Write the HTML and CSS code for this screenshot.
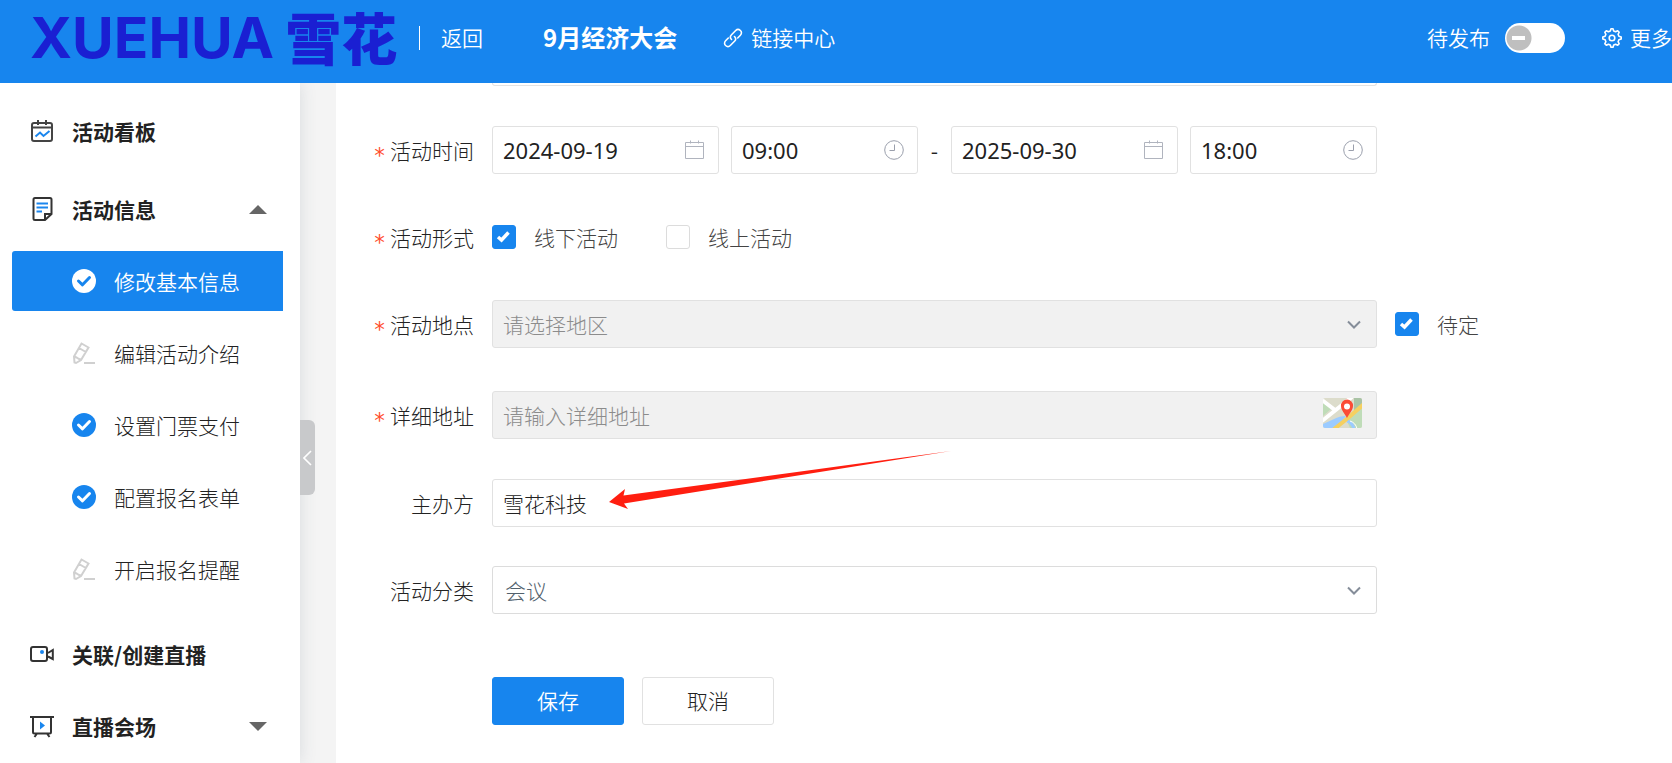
FILE: index.html
```html
<!DOCTYPE html>
<html lang="zh-CN">
<head>
<meta charset="utf-8">
<title>9月经济大会</title>
<link rel="stylesheet" href="styles.css">
</head>
<body>
<svg class="defs" aria-hidden="true">
  <symbol id="done" viewBox="0 0 24 24"><circle cx="12" cy="12" r="12" fill="currentColor"/><path class="tick" d="M6.500 12l4 3.800L17.500 8.500" fill="none" stroke-width="3" stroke-linecap="round" stroke-linejoin="round"/></symbol>
  <symbol id="pencil" viewBox="0 0 24 24"><g fill="none" stroke="#d0d0d0" stroke-width="2"><path d="M2.500 21.500L2 15.500 9.500 2.500l7 4L9 19 4 22zM7 7l6.800 4M2 15.500l2.500 1 1.500 1 3 1.500M12 22h11"/></g></symbol>
  <symbol id="check" viewBox="0 0 24 24"><path d="M6 12l3.500 3L16.500 7.500" fill="none" stroke="#fff" stroke-width="3.500"/></symbol>
  <symbol id="calendar" viewBox="0 0 20 20"><path d="M.5 2.500h18v16H.5zM.5 6.500h18M5.500.5v3M13.500.5v3" fill="none" stroke="#b0b4be"/></symbol>
  <symbol id="clock" viewBox="0 0 20 20"><circle cx="10" cy="10" r="9.300" fill="none" stroke="#9a9fac"/><path d="M10.500 4.500v6H5.500" fill="none" stroke="#9a9fac"/></symbol>
  <symbol id="chevron" viewBox="0 0 14 9"><path d="M1 1.500l6 6 6-6" fill="none" stroke="#858d99" stroke-width="2"/></symbol>
</svg>

<header class="header">
  <div class="logo"><span class="logo-latin">XUEHUA</span><span class="logo-cjk">雪花</span></div>
  <a class="back" href="#">返回</a>
  <h1 class="title">9月经济大会</h1>
  <a class="links" href="#">
    <svg width="20" height="20" viewBox="0 0 20 20" fill="none" stroke="currentColor" stroke-width="1.600" stroke-linecap="round"><path d="M8.500 11.500C7 10 7.200 8 8.500 6.700L12.700 2.500C14 1.200 16 1.200 17.400 2.500s1.400 3.400 0 4.800L14.700 10M11.500 8.500c1.500 1.500 1.300 3.500 0 4.800L7.300 17.500C6 18.800 4 18.800 2.600 17.500s-1.400-3.400 0-4.800L5.300 10"/></svg>
    <span>链接中心</span>
  </a>
  <div class="publish">
    <label for="publish">待发布</label>
    <input class="switch" type="checkbox" role="switch" id="publish">
  </div>
  <button class="more" type="button">
    <svg width="20" height="20" viewBox="0 0 20 20" fill="none" stroke="currentColor" stroke-width="1.600" stroke-linejoin="round"><path d="M8.300 3L9 .8h2L11.700 3l1.900.8 2.100-1.100 1.500 1.500-1.100 2.100.8 1.900 2.300.8v2l-2.300.8-.8 1.900 1.100 2.100-1.500 1.500-2.100-1.100-1.900.8-.7 2.200H9L8.300 17l-1.900-.8-2.100 1.100-1.500-1.500 1.100-2.100-.8-1.900L.8 11V9l2.300-.8.8-1.900-1.100-2.100 1.500-1.500 2.100 1.100z"/><circle cx="10" cy="10" r="2.800"/></svg>
    <span>更多</span>
  </button>
</header>

<div class="layout">
  <nav class="sidebar">
    <a class="group group--first" href="#">
      <svg class="group-icon" viewBox="0 0 24 24" fill="none" stroke="#444" stroke-width="2"><rect x="2" y="4" width="20" height="18" rx="2"/><path d="M2 8.500h20M8 1v5M16 1v5"/><path d="M5.500 17.500l4.500-4 3.500 3.500 6-5" stroke="#1a86ee"/></svg>
      活动看板
    </a>
    <a class="group" href="#">
      <svg class="group-icon" viewBox="0 0 24 24" fill="none" stroke="#333" stroke-width="2"><path d="M5 1h15a1.500 1.500 0 0 1 1.500 1.500V17L15 23H5a1.500 1.500 0 0 1-1.500-1.500v-19A1.500 1.500 0 0 1 5 1zM15 23v-6h6.500"/><path d="M6.500 6.500H18M6.500 10.500H18M6.500 14.500h5.500" stroke="#1a86ee"/></svg>
      活动信息
      <span class="caret caret--up"></span>
    </a>
    <ul class="sub">
      <li><a class="sub-item sub-item--active" href="#"><svg class="sub-icon"><use href="#done"/></svg>修改基本信息</a></li>
      <li><a class="sub-item" href="#"><svg class="sub-icon"><use href="#pencil"/></svg>编辑活动介绍</a></li>
      <li><a class="sub-item" href="#"><svg class="sub-icon"><use href="#done"/></svg>设置门票支付</a></li>
      <li><a class="sub-item" href="#"><svg class="sub-icon"><use href="#done"/></svg>配置报名表单</a></li>
      <li><a class="sub-item" href="#"><svg class="sub-icon"><use href="#pencil"/></svg>开启报名提醒</a></li>
    </ul>
    <a class="group group--compact" href="#">
      <svg class="group-icon" viewBox="0 0 24 24" fill="none" stroke="#333" stroke-width="2"><rect x="1" y="5" width="16" height="14" rx="2"/><path d="M18 11l4.800-3v9L18 14.500"/><circle cx="12" cy="10" r="2" fill="#1a86ee" stroke="none"/></svg>
      关联/创建直播
    </a>
    <a class="group group--compact" href="#">
      <svg class="group-icon" viewBox="0 0 24 24" fill="none" stroke="#333" stroke-width="2"><path d="M0 3h24M3 3v15a1.500 1.500 0 0 0 1.500 1.500h15A1.500 1.500 0 0 0 21 18V3M7 19.500L4.500 23M17 19.500l2.500 3.500"/><path d="M10 7.500l5 4-5 4z" fill="#1a86ee" stroke="none"/></svg>
      直播会场
      <span class="caret caret--down"></span>
    </a>
    <button class="collapse" type="button" aria-label="收起菜单">
      <svg width="9" height="16" viewBox="0 0 9 16"><path d="M8 1L1 8l7 7" fill="none" stroke="#fff" stroke-width="1.600"/></svg>
    </button>
  </nav>

  <main class="main">
    <form class="form">
      <div class="row row--clipped"><div class="clipped-field"></div></div>

      <div class="row">
        <label class="label required" for="start-date">活动时间</label>
        <div class="period">
          <div class="moment">
            <div class="field field--date"><input class="input" id="start-date" type="text" value="2024-09-19"><svg class="picker"><use href="#calendar"/></svg></div>
            <div class="field field--time"><input class="input" type="text" aria-label="开始时间" value="09:00"><svg class="picker"><use href="#clock"/></svg></div>
          </div>
          <span class="dash">-</span>
          <div class="moment">
            <div class="field field--date"><input class="input" type="text" aria-label="结束日期" value="2025-09-30"><svg class="picker"><use href="#calendar"/></svg></div>
            <div class="field field--time"><input class="input" type="text" aria-label="结束时间" value="18:00"><svg class="picker"><use href="#clock"/></svg></div>
          </div>
        </div>
      </div>

      <div class="row row--tight">
        <span class="label required">活动形式</span>
        <div class="options">
          <label class="option"><span class="box"><input type="checkbox" checked><svg><use href="#check"/></svg></span>线下活动</label>
          <label class="option"><span class="box"><input type="checkbox"><svg><use href="#check"/></svg></span>线上活动</label>
        </div>
      </div>

      <div class="row row--tight">
        <label class="label required" for="region">活动地点</label>
        <div class="field"><select class="input" id="region" disabled><option>请选择地区</option></select><svg class="chevron"><use href="#chevron"/></svg></div>
        <label class="option"><span class="box"><input type="checkbox" checked><svg><use href="#check"/></svg></span>待定</label>
      </div>

      <div class="row row--loose">
        <label class="label required" for="address">详细地址</label>
        <div class="field">
          <input class="input" id="address" type="text" placeholder="请输入详细地址" disabled>
          <svg class="map" viewBox="0 0 39 30">
            <clipPath id="map-edge"><rect width="39" height="30" rx="2"/></clipPath>
            <g clip-path="url(#map-edge)">
              <path fill="#dcdccb" d="M0 0h39v30H0z"/>
              <path fill="#bfdcb8" d="M0 4l8 7-8 7zM39 8v22H27l-3-7z"/>
              <path fill="#a9c3a5" d="M31 0h8v7l-8 6z"/>
              <path fill="none" stroke="#fff" stroke-width="4" d="M-1 2l13 10M-1 23L29-1"/>
              <path fill="#9bcbff" d="M0 26c8-3 14-8 23-8l-9 12H0z"/>
              <path fill="none" stroke="#9bcbff" stroke-width="3" d="M24 23q5 1 7 8"/>
              <path fill="none" stroke="#fff" stroke-width="1" d="M27 23q6 2 7 8"/>
              <path fill="none" stroke="#f5d060" stroke-width="4" d="M10 32L25 20 41 6"/>
              <path fill="#fb4b35" d="M24 1.500a6 6 0 0 1 6 6.500c0 4-4 8-6 12-2-4-6-8-6-12a6 6 0 0 1 6-6.500z"/>
              <circle cx="24" cy="8.500" r="3" fill="#fff"/>
            </g>
          </svg>
        </div>
      </div>

      <div class="row">
        <label class="label" for="host">主办方</label>
        <div class="field">
          <input class="input" id="host" type="text" value="雪花科技">
          <svg class="arrow" viewBox="0 0 342 60"><path fill="#ff1e10" d="M0 51L16 38 14.500 44.500 342 0 15 52.500 19 58z"/></svg>
        </div>
      </div>

      <div class="row row--tight">
        <label class="label" for="category">活动分类</label>
        <div class="field"><select class="input input--category" id="category"><option>会议</option></select><svg class="chevron"><use href="#chevron"/></svg></div>
      </div>

      <div class="row row--actions">
        <div class="actions">
          <button class="button button--primary" type="submit">保存</button>
          <button class="button" type="button">取消</button>
        </div>
      </div>
    </form>
  </main>
</div>
</body>
</html>
```
FILE: styles.css
```css
* {
  box-sizing: border-box;
}

body {
  margin: 0;
  height: 100vh;
  display: flex;
  flex-direction: column;
  overflow: hidden;
  color: #222;
  background: #f4f4f4;
  font: 300 21px/30px "Noto Sans CJK SC", sans-serif;
}

a {
  color: inherit;
  text-decoration: none;
}

button,
input,
select {
  font: inherit;
  color: inherit;
}

.defs {
  position: absolute;
  width: 0;
  height: 0;
}

/* Header */
.header {
  position: relative;
  z-index: 1;
  flex: none;
  display: flex;
  align-items: center;
  height: 83px;
  padding: 0 0 7px 30px;
  color: #fff;
  background: #1785ee;
  font-weight: 350;
  white-space: nowrap;
}

.back,
.title,
.links span,
.publish label,
.more span {
  padding-bottom: 3px;
}

.logo {
  display: flex;
  align-items: center;
  gap: 11px;
  width: 389px;
  color: #1a1fd2;
  line-height: 70px;
}

.logo-latin {
  font-family: Inter, sans-serif;
  font-size: 57px;
  font-weight: 700;
}

.logo-cjk {
  padding-bottom: 4px;
  font-size: 56px;
  font-weight: 900;
}

.back {
  padding-left: 22px;
  background: linear-gradient(#fff, #fff) left center / 1px 24px no-repeat;
}

.title {
  margin: 0 46px 0 60px;
  font-size: 24px;
  font-weight: 700;
}

.links {
  display: flex;
  align-items: center;
  gap: 8px;
}

.publish {
  display: flex;
  align-items: center;
  gap: 15px;
  margin-left: auto;
}

.switch {
  appearance: none;
  width: 60px;
  height: 30px;
  margin: 0;
  border-radius: 15px;
  background:
    linear-gradient(#fff, #fff) 7px center / 13px 4px no-repeat,
    radial-gradient(circle at 14px 15px, #bfbfbf 12px, #fff 13px);
}

.more {
  display: flex;
  align-items: center;
  gap: 8px;
  margin-left: 37px;
  padding: 0;
  border: 0;
  background: none;
}

/* Sidebar */
.layout {
  flex: 1;
  display: flex;
  min-height: 0;
}

.sidebar {
  position: relative;
  flex: none;
  width: 300px;
  background: #fff;
  box-shadow: 0 0 16px rgba(60, 80, 100, 0.15);
}

.group {
  display: flex;
  align-items: center;
  gap: 18px;
  height: 78px;
  padding: 0 33px 0 30px;
  font-weight: 700;
}

.group--first {
  margin-top: 9px;
}

.group--compact {
  height: 72px;
}

.group-icon,
.sub-icon {
  flex: none;
  width: 24px;
  height: 24px;
}

.caret {
  margin-left: auto;
  border: 9px solid transparent;
}

.caret--up {
  border-top: 0;
  border-bottom-color: #666;
}

.caret--down {
  border-bottom: 0;
  border-top-color: #666;
}

.sub {
  display: flex;
  flex-direction: column;
  gap: 12px;
  margin: 3px 0 19px;
  padding: 0 17px 0 12px;
  list-style: none;
}

.sub-item {
  display: flex;
  align-items: center;
  gap: 18px;
  height: 60px;
  padding-left: 60px;
}

.sub-icon {
  color: #1785ee;
}

.tick {
  stroke: var(--tick, #fff);
}

.sub-item--active {
  border-radius: 3px 0 0 3px;
  color: #fff;
  background: #1785ee;
  font-weight: 350;
}

.sub-item--active .sub-icon {
  color: #fff;
  --tick: #1785ee;
}

.collapse {
  position: absolute;
  top: 337px;
  left: 100%;
  display: flex;
  align-items: center;
  justify-content: center;
  width: 15px;
  height: 75px;
  padding: 0;
  border: 0;
  border-radius: 0 6px 6px 0;
  background: #c8c9cb;
}

/* Form */
.main {
  flex: 1;
  min-width: 0;
  margin-left: 36px;
  background: #fff;
}

.row {
  display: grid;
  grid-template-columns: 138px minmax(0, 1fr) 277px;
  column-gap: 18px;
  align-items: center;
  min-height: 48px;
  margin-top: 40px;
}

.row--tight {
  margin-top: 39px;
}

.row--loose {
  margin-top: 43px;
}

.row--clipped {
  min-height: 0;
  margin-top: 0;
}

.clipped-field {
  grid-column: 2;
  height: 3px;
  border: 1px solid #e3e3e3;
  border-top: 0;
  border-radius: 0 0 3px 3px;
}

.label {
  text-align: right;
}

.required::before {
  content: "*";
  margin-right: 4px;
  color: #ff4d2d;
  font: 400 21px/20px "DejaVu Sans Mono", monospace;
  vertical-align: -4px;
}

.field {
  position: relative;
}

.input {
  display: block;
  appearance: none;
  width: 100%;
  height: 48px;
  margin: 0;
  padding: 0 10px;
  border: 1px solid #e1e1e1;
  border-radius: 3px;
  background: #fff;
}

.input:disabled {
  background: #f1f1f1;
  color: #8c8c8c;
  opacity: 1;
}

.input::placeholder {
  color: #8c8c8c;
}

.input--category {
  padding: 0 12px;
  border-color: #dcdcdc;
  color: #52616d;
}

.period,
.moment {
  display: flex;
}

.moment {
  flex: 1;
  gap: 12px;
}

.moment .input {
  font: 400 22px/30px "Noto Sans", sans-serif;
}

.field--date {
  flex: 227 1 0;
}

.field--time {
  flex: 187 1 0;
}

.dash {
  width: 33px;
  line-height: 48px;
  text-align: center;
  font-weight: 400;
}

.picker {
  position: absolute;
  top: 14px;
  right: 14px;
  width: 20px;
  height: 20px;
}

.chevron {
  position: absolute;
  top: 20px;
  right: 16px;
  width: 14px;
  height: 9px;
  pointer-events: none;
}

.map {
  position: absolute;
  top: 7px;
  right: 15px;
  width: 39px;
  height: 30px;
}

.arrow {
  position: absolute;
  top: -28px;
  left: 117px;
  width: 342px;
  height: 60px;
  pointer-events: none;
}

.options {
  display: flex;
  gap: 48px;
}

.option {
  display: flex;
  align-items: center;
  gap: 18px;
  color: #444;
}

.box {
  position: relative;
  width: 24px;
  height: 24px;
}

.box input {
  display: block;
  appearance: none;
  width: 24px;
  height: 24px;
  margin: 0;
  border: 1px solid #dcdcdc;
  border-radius: 3px;
}

.box input:checked {
  border-color: #1785ee;
  background: #1785ee;
}

.box svg {
  position: absolute;
  inset: 0;
  width: 24px;
  height: 24px;
  pointer-events: none;
}

.row--actions {
  margin-top: 63px;
}

.actions {
  grid-column: 2;
  display: flex;
  gap: 18px;
}

.button {
  width: 132px;
  height: 48px;
  padding: 0 0 2px;
  border: 1px solid #e1e1e1;
  border-radius: 3px;
  background: #fff;
}

.button--primary {
  border-color: #1785ee;
  color: #fff;
  background: #1785ee;
  font-weight: 350;
}
```
